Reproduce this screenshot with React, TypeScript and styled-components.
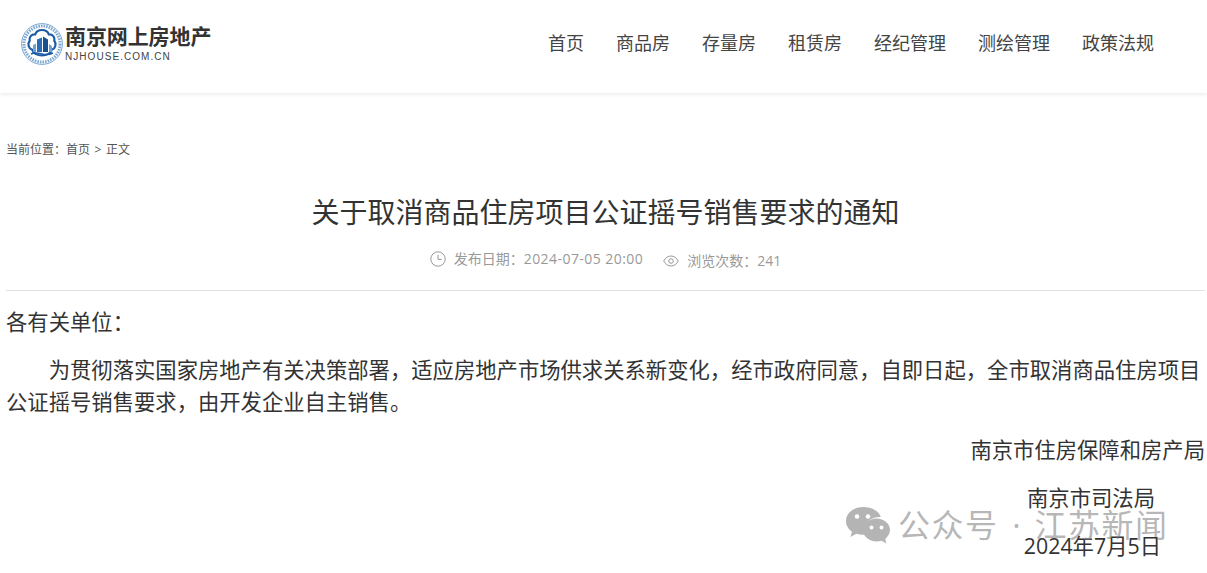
import { FC } from 'react';
import styled, { createGlobalStyle } from 'styled-components';

const FONT_STACK = `"Open Sans", "Noto Sans CJK SC", sans-serif`;

const navItems = ['首页', '商品房', '存量房', '租赁房', '经纪管理', '测绘管理', '政策法规'];

const GlobalStyle = createGlobalStyle`
  html, body {
    margin: 0;
    padding: 0;
    background: #fff;
    overflow: hidden;
  }
  body {
    font-family: ${FONT_STACK};
    color: #333;
  }
`;

const Page = styled.div`
  width: 1207px;
  height: 573px;
  position: relative;
  overflow: hidden;
  background: #fff;
`;

const Header = styled.header`
  height: 93px;
  box-sizing: border-box;
  display: flex;
  align-items: center;
  justify-content: space-between;
  padding: 0 53px 6px 21px;
  box-shadow: 0 1px 4px rgba(0, 0, 0, 0.1);
`;

const Logo = styled.div`
  display: flex;
  align-items: center;
  gap: 2px;
`;

const LogoText = styled.div`
  display: flex;
  flex-direction: column;
  margin-top: -1px;
`;

const LogoTitle = styled.div`
  font-size: 21px;
  line-height: 24px;
  font-weight: 700;
  color: #333;
  letter-spacing: -0.1px;
`;

const LogoSub = styled.div`
  margin-top: 3px;
  font-family: "Liberation Sans", sans-serif;
  font-size: 10px;
  line-height: 12px;
  letter-spacing: 1.05px;
  color: #444;
`;

const Nav = styled.nav`
  display: flex;
  gap: 32px;
  margin-top: -1px;
`;

const NavItem = styled.a`
  font-size: 18px;
  line-height: 26px;
  color: #444;
`;

const Main = styled.main`
  padding: 49px 2px 0 6px;
`;

const Crumb = styled.div`
  font-size: 12px;
  line-height: 16px;
  color: #555;
  display: flex;
`;

const CrumbTrail = styled.div`
  display: flex;
  gap: 4.5px;
`;

const Title = styled.h1`
  margin: 33px 0 0;
  font-size: 28px;
  line-height: 42px;
  font-weight: 400;
  color: #333;
  text-align: center;
`;

const Meta = styled.div`
  margin-top: 17px;
  display: flex;
  justify-content: center;
  align-items: center;
  gap: 20px;
  padding-bottom: 20px;
  border-bottom: 1px solid #e2e2e2;
  font-size: 14px;
  line-height: 20px;
  color: #999;
`;

const MetaItem = styled.span<{ $shift: number }>`
  display: flex;
  align-items: center;
  gap: 8px;
  transform: translateY(${({ $shift }) => $shift}px);
`;

const MetaDate = styled.span`
  letter-spacing: 0.45px;
`;

const Body = styled.div`
  font-size: 21.33px;
  line-height: 32px;
  color: #333;
  padding-top: 15px;
`;

const Para = styled.p<{ $indent?: boolean; $right?: boolean; $pad?: number }>`
  margin: 0 0 16px;
  text-indent: ${({ $indent }) => ($indent ? '2em' : '0')};
  text-align: ${({ $right }) => ($right ? 'right' : 'left')};
  padding-right: ${({ $pad }) => $pad || 0}px;
`;

const Watermark = styled.div`
  position: absolute;
  left: 846px;
  top: 505px;
  display: flex;
  align-items: center;
  font-size: 32px;
  line-height: 40px;
  letter-spacing: 1.5px;
  color: rgba(120, 120, 120, 0.55);
`;

const WatermarkName = styled.span`
  margin-left: 8px;
`;

const WatermarkDot = styled.span`
  width: 36px;
  text-align: center;
  letter-spacing: 0;
`;

const LogoMark: FC = () => (
  <svg width="42" height="42" viewBox="0 0 42 42">
    <circle cx="21" cy="21" r="20.4" fill="none" stroke="#6a9ccc" strokeWidth="0.9" />
    <circle cx="21" cy="21" r="18" fill="none" stroke="#7fa9d2" strokeWidth="3" strokeDasharray="1.6 1" />
    <path
      d="M21 7c3.600 0 6 2 6.800 4.300 3.800-.3 6.400 3 5.500 6.500 2.400 3 1.200 7.800-2.500 8.900-.8 3.300-4.800 5.800-9.800 5.800s-9-2.500-9.800-5.800c-3.700-1.100-4.900-5.900-2.500-8.900-.9-3.500 1.700-6.800 5.500-6.500C15 9 17.400 7 21 7z"
      fill="#fff"
      stroke="#1d5ba6"
      strokeWidth="2.200"
    />
    <path d="M16 29V16.500l5-2V29z" fill="#2a6cb5" />
    <path d="M22 29V13.500l5 3V29z" fill="#16508f" />
    <path d="M12 29v-7l3-1.500V29zM28 29v-8l3 2v6z" fill="#6ea3d6" />
    <path d="M10 31c4-2 7-1 11 0s7 1 11-1" fill="none" stroke="#1d5ba6" strokeWidth="1.500" />
  </svg>
);

const ClockIcon: FC = () => (
  <svg width="16" height="16" viewBox="0 0 16 16" fill="none" stroke="#999" strokeWidth="1">
    <circle cx="8" cy="8" r="7.2" />
    <path d="M8 3.800V8.400H11.800" />
  </svg>
);

const EyeIcon: FC = () => (
  <svg width="16" height="12" viewBox="0 0 16 12" fill="none" stroke="#999" strokeWidth="1">
    <path d="M0.700 6C2.700 2.600 5.100 1 8 1s5.300 1.600 7.300 5C13.300 9.400 10.900 11 8 11S2.700 9.400 0.700 6z" />
    <circle cx="8" cy="6" r="2.300" />
  </svg>
);

const WechatIcon: FC = () => (
  <svg width="44" height="38" viewBox="0 0 44 38">
    <path
      d="M17 1C7.600 1 0 7.200 0 15c0 4.400 2.400 8.200 6 10.800L4.400 31l6-3.200c2 .6 4.200 1 6.600 1 .6 0 1.200 0 1.800-.1-.5-1.400-.8-2.900-.8-4.400 0-7.400 7-13.300 15.600-13.300h1.200C33 5 25.800 1 17 1z"
      fill="#b4b4b4"
    />
    <path
      d="M44 24c0-6.300-6-11.500-13.500-11.500S17 17.700 17 24s6 11.500 13.500 11.500c1.800 0 3.500-.3 5.100-.8l4.900 2.800-1.300-4.500C42 30.400 44 27.400 44 24z"
      fill="#b4b4b4"
    />
    <circle cx="11" cy="10.500" r="2.300" fill="#fff" />
    <circle cx="22" cy="10.500" r="2.300" fill="#fff" />
    <circle cx="25.500" cy="21.500" r="1.900" fill="#fff" />
    <circle cx="35.500" cy="21.500" r="1.900" fill="#fff" />
  </svg>
);

const App: FC = () => (
  <Page>
    <GlobalStyle />
    <Header>
      <Logo>
        <LogoMark />
        <LogoText>
          <LogoTitle>南京网上房地产</LogoTitle>
          <LogoSub>NJHOUSE.COM.CN</LogoSub>
        </LogoText>
      </Logo>
      <Nav>
        {navItems.map((item) => (
          <NavItem key={item}>{item}</NavItem>
        ))}
      </Nav>
    </Header>
    <Main>
      <Crumb>
        <span>当前位置：</span>
        <CrumbTrail>
          <span>首页</span>
          <span>&gt;</span>
          <span>正文</span>
        </CrumbTrail>
      </Crumb>
      <Title>关于取消商品住房项目公证摇号销售要求的通知</Title>
      <Meta>
        <MetaItem $shift={-1}>
          <ClockIcon />
          <span>
            发布日期：<MetaDate>2024-07-05 20:00</MetaDate>
          </span>
        </MetaItem>
        <MetaItem $shift={1}>
          <EyeIcon />
          浏览次数：241
        </MetaItem>
      </Meta>
      <Body>
        <Para>各有关单位：</Para>
        <Para $indent>
          为贯彻落实国家房地产有关决策部署，适应房地产市场供求关系新变化，经市政府同意，自即日起，全市取消商品住房项目公证摇号销售要求，由开发企业自主销售。
        </Para>
        <Para $right>南京市住房保障和房产局</Para>
        <Para $right $pad={50}>南京市司法局</Para>
        <Para $right $pad={44}>2024年7月5日</Para>
      </Body>
    </Main>
    <Watermark>
      <WechatIcon />
      <WatermarkName>公众号</WatermarkName>
      <WatermarkDot>·</WatermarkDot>
      <span>江苏新闻</span>
    </Watermark>
  </Page>
);

export default App;
